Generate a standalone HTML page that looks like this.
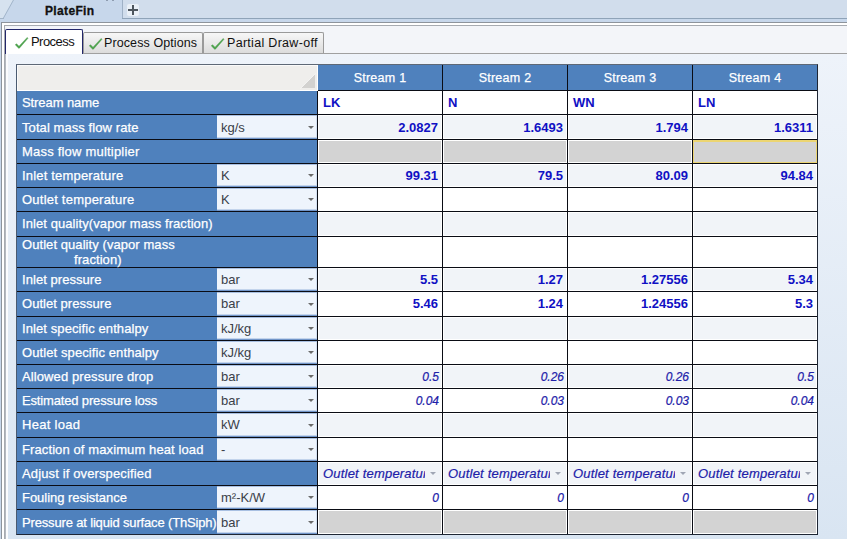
<!DOCTYPE html>
<html><head><meta charset="utf-8"><title>PlateFin</title>
<style>
*{margin:0;padding:0;box-sizing:border-box}
html,body{width:847px;height:539px;overflow:hidden}
body{position:relative;background:#c7d7eb;font-family:"Liberation Sans",sans-serif;font-size:13px;color:#000}
.a{position:absolute}
.t{position:absolute;white-space:nowrap;line-height:15px}
.lb{color:#fff;font-size:13px;-webkit-text-stroke:0.25px #fff}
.un{color:#3a4048;font-size:13px}
.vb{color:#1010c4;font-weight:bold;font-size:13px}
.vi{color:#2020a8;font-style:italic;font-size:12px;-webkit-text-stroke:0.2px #2020a8}
.arr{position:absolute;width:0;height:0;border-left:3px solid transparent;border-right:3px solid transparent;border-top:3px solid #6a6a6a}
.tab{position:absolute;border:1px solid #9a9a9a;border-bottom:none;border-radius:2px 2px 0 0;background:linear-gradient(#f7f7f7,#dcdcdc)}
.ub{position:absolute;left:217px;width:100px;background:#eef4fc;box-shadow:inset 0 1px 0 #a9c0e2,inset 0 -1px 0 #7195c9,inset 0 -2px 0 #c3d4ec,inset -1px 0 0 #d3e0f2}
</style></head><body>
<svg class="a" style="left:0;top:0" width="847" height="26">
<rect x="0" y="0" width="847" height="22" fill="#c7d7eb"/>
<polygon points="0,0 13,0 3,18 0,18" fill="#d6e2ef"/>
<rect x="122" y="0" width="725" height="18" fill="#d1ddec"/>
<line x1="13.5" y1="0" x2="3.5" y2="18" stroke="#a3b6cb" stroke-width="1"/>
<rect x="0" y="18" width="4" height="1" fill="#a3b5c9"/>
<rect x="122" y="0" width="1" height="19" fill="#9fb1c6"/>
<rect x="122" y="18" width="725" height="1" fill="#8fa3b8"/>
<rect x="1" y="22" width="846" height="1" fill="#8d949c"/>
<rect x="2" y="23" width="845" height="2" fill="#ffffff"/>
<rect x="4" y="25" width="843" height="1" fill="#a7abb1"/>
</svg>
<div class="a" style="left:1px;top:22px;width:1px;height:517px;background:#8d949c"></div>
<div class="a" style="left:2px;top:23px;width:2px;height:516px;background:#fff"></div>
<div class="a" style="left:4px;top:25px;width:1px;height:514px;background:#a7abb1"></div>
<div class="a" style="left:5px;top:26px;width:842px;height:27px;background:#f3f5f9"></div>
<div class="a" style="left:5px;top:53px;width:842px;height:1px;background:#a0a0a0"></div>
<div class="a" style="left:5px;top:54px;width:842px;height:485px;background:linear-gradient(#eef3fa,#d9e5f2)"></div>
<div class="a" style="left:5px;top:54px;width:1px;height:485px;background:#b4b9c0"></div>
<div class="a" style="left:6px;top:54px;width:2px;height:485px;background:#fbfcfe"></div>
<div class="t" style="left:45px;top:4px;font-weight:bold;font-size:12px;letter-spacing:0.35px;color:#111;-webkit-text-stroke:0.3px #111">PlateFin</div>
<div class="a" style="left:127px;top:4px;width:12px;height:12px;background:#eaf0f7;border-radius:2px"></div>
<div class="a" style="left:128px;top:9px;width:10px;height:2px;background:#4e565e"></div>
<div class="a" style="left:132px;top:5px;width:2px;height:10px;background:#4e565e"></div>
<div class="a" style="left:106px;top:0;width:2px;height:1px;background:#8e9cb0"></div>
<div class="a" style="left:112px;top:0;width:2px;height:1px;background:#8e9cb0"></div>

<div class="a" style="left:5px;top:29px;width:78px;height:25px;background:#fff;border:1px solid #23276a;border-bottom:none;border-radius:2px 2px 0 0"></div>
<svg class="a" style="left:14px;top:37px" width="15" height="13"><path d="M1.2,7.8 L2.6,6.8 L5,9.2 L13.2,0.4 L14,1.3 L5.4,11.2 L4.6,11.2 Z" fill="#4da64d" stroke="#3f8f3f" stroke-width="0.35"/></svg>
<div class="t" style="left:31px;top:34px;font-size:13px;letter-spacing:-0.55px;color:#111">Process</div>
<div class="tab" style="left:83px;top:32px;width:120px;height:21px"></div>
<svg class="a" style="left:88px;top:38px" width="15" height="13"><path d="M1.2,7.8 L2.6,6.8 L5,9.2 L13.2,0.4 L14,1.3 L5.4,11.2 L4.6,11.2 Z" fill="#4da64d" stroke="#3f8f3f" stroke-width="0.35"/></svg>
<div class="t" style="left:104px;top:36px;font-size:12.5px;letter-spacing:0.1px;color:#111">Process Options</div>
<div class="tab" style="left:203px;top:32px;width:121px;height:21px"></div>
<svg class="a" style="left:210px;top:38px" width="15" height="13"><path d="M1.2,7.8 L2.6,6.8 L5,9.2 L13.2,0.4 L14,1.3 L5.4,11.2 L4.6,11.2 Z" fill="#4da64d" stroke="#3f8f3f" stroke-width="0.35"/></svg>
<div class="t" style="left:227px;top:36px;font-size:12.5px;letter-spacing:0.3px;color:#111">Partial Draw-off</div>
<div class="a" style="left:16px;top:64px;width:802px;height:471px;border:1px solid #1e2634;border-left-color:#4a5a70;border-top-color:#5e6876;background:#0a0c14"></div>
<div class="a" style="left:17px;top:65px;width:301px;height:26px;background:#efeeec;border:1px solid #fff;border-left-color:#fafafa;border-top-color:#fafafa"></div>
<svg class="a" style="left:300px;top:73px" width="17" height="16"><polygon points="1,15 15,15 15,1" fill="#d3d2d0"/><line x1="0.5" y1="15.5" x2="15.5" y2="0.5" stroke="#fff" stroke-opacity="0.6" stroke-width="1"/></svg>
<div class="a" style="left:318px;top:65px;width:124px;height:25px;background:#4f81bd"></div>
<div class="t lb" style="left:318px;top:71px;width:124px;text-align:center;font-size:12.5px;letter-spacing:0.25px">Stream 1</div>
<div class="a" style="left:443px;top:65px;width:124px;height:25px;background:#4f81bd"></div>
<div class="t lb" style="left:443px;top:71px;width:124px;text-align:center;font-size:12.5px;letter-spacing:0.25px">Stream 2</div>
<div class="a" style="left:568px;top:65px;width:124px;height:25px;background:#4f81bd"></div>
<div class="t lb" style="left:568px;top:71px;width:124px;text-align:center;font-size:12.5px;letter-spacing:0.25px">Stream 3</div>
<div class="a" style="left:693px;top:65px;width:124px;height:25px;background:#4f81bd"></div>
<div class="t lb" style="left:693px;top:71px;width:124px;text-align:center;font-size:12.5px;letter-spacing:0.25px">Stream 4</div>
<div class="a" style="left:17px;top:91px;width:300px;height:23px;background:#4f81bd"></div>
<div class="t lb" style="left:22px;top:95px;letter-spacing:-0.08px">Stream name</div>
<div class="a" style="left:318px;top:91px;width:124px;height:23px;background:#ffffff;border:1px solid #fff"></div>
<div class="t vb" style="left:323px;top:95px">LK</div>
<div class="a" style="left:443px;top:91px;width:124px;height:23px;background:#ffffff;border:1px solid #fff"></div>
<div class="t vb" style="left:448px;top:95px">N</div>
<div class="a" style="left:568px;top:91px;width:124px;height:23px;background:#ffffff;border:1px solid #fff"></div>
<div class="t vb" style="left:573px;top:95px">WN</div>
<div class="a" style="left:693px;top:91px;width:124px;height:23px;background:#ffffff;border:1px solid #fff"></div>
<div class="t vb" style="left:698px;top:95px">LN</div>
<div class="a" style="left:17px;top:115px;width:300px;height:24px;background:#4f81bd"></div>
<div class="t lb" style="left:22px;top:120px;letter-spacing:0.079px">Total mass flow rate</div>
<div class="ub" style="top:115px;height:24px"></div>
<div class="t un" style="left:221px;top:120px">kg/s</div>
<div class="arr" style="left:308px;top:126px"></div>
<div class="a" style="left:318px;top:115px;width:124px;height:24px;background:#f1f4f8;border:1px solid #fff"></div>
<div class="t vb" style="left:318px;top:120px;width:120px;text-align:right">2.0827</div>
<div class="a" style="left:443px;top:115px;width:124px;height:24px;background:#f1f4f8;border:1px solid #fff"></div>
<div class="t vb" style="left:443px;top:120px;width:120px;text-align:right">1.6493</div>
<div class="a" style="left:568px;top:115px;width:124px;height:24px;background:#f1f4f8;border:1px solid #fff"></div>
<div class="t vb" style="left:568px;top:120px;width:120px;text-align:right">1.794</div>
<div class="a" style="left:693px;top:115px;width:124px;height:24px;background:#f1f4f8;border:1px solid #fff"></div>
<div class="t vb" style="left:693px;top:120px;width:120px;text-align:right">1.6311</div>
<div class="a" style="left:17px;top:140px;width:300px;height:23px;background:#4f81bd"></div>
<div class="t lb" style="left:22px;top:144px;letter-spacing:0.205px">Mass flow multiplier</div>
<div class="a" style="left:318px;top:140px;width:124px;height:23px;background:#d3d3d3;border:1px solid #fff"></div>
<div class="a" style="left:443px;top:140px;width:124px;height:23px;background:#d3d3d3;border:1px solid #fff"></div>
<div class="a" style="left:568px;top:140px;width:124px;height:23px;background:#d3d3d3;border:1px solid #fff"></div>
<div class="a" style="left:693px;top:140px;width:124px;height:23px;background:#d3d3d3;border:1px solid #ecd572;border-top-width:2px"></div>
<div class="a" style="left:17px;top:164px;width:300px;height:23px;background:#4f81bd"></div>
<div class="t lb" style="left:22px;top:168px;letter-spacing:0.181px">Inlet temperature</div>
<div class="ub" style="top:164px;height:23px"></div>
<div class="t un" style="left:221px;top:168px">K</div>
<div class="arr" style="left:308px;top:174px"></div>
<div class="a" style="left:318px;top:164px;width:124px;height:23px;background:#f1f4f8;border:1px solid #fff"></div>
<div class="t vb" style="left:318px;top:168px;width:120px;text-align:right">99.31</div>
<div class="a" style="left:443px;top:164px;width:124px;height:23px;background:#f1f4f8;border:1px solid #fff"></div>
<div class="t vb" style="left:443px;top:168px;width:120px;text-align:right">79.5</div>
<div class="a" style="left:568px;top:164px;width:124px;height:23px;background:#f1f4f8;border:1px solid #fff"></div>
<div class="t vb" style="left:568px;top:168px;width:120px;text-align:right">80.09</div>
<div class="a" style="left:693px;top:164px;width:124px;height:23px;background:#f1f4f8;border:1px solid #fff"></div>
<div class="t vb" style="left:693px;top:168px;width:120px;text-align:right">94.84</div>
<div class="a" style="left:17px;top:188px;width:300px;height:23px;background:#4f81bd"></div>
<div class="t lb" style="left:22px;top:192px;letter-spacing:0.224px">Outlet temperature</div>
<div class="ub" style="top:188px;height:23px"></div>
<div class="t un" style="left:221px;top:192px">K</div>
<div class="arr" style="left:308px;top:198px"></div>
<div class="a" style="left:318px;top:188px;width:124px;height:23px;background:#ffffff;border:1px solid #fff"></div>
<div class="a" style="left:443px;top:188px;width:124px;height:23px;background:#ffffff;border:1px solid #fff"></div>
<div class="a" style="left:568px;top:188px;width:124px;height:23px;background:#ffffff;border:1px solid #fff"></div>
<div class="a" style="left:693px;top:188px;width:124px;height:23px;background:#ffffff;border:1px solid #fff"></div>
<div class="a" style="left:17px;top:212px;width:300px;height:24px;background:#4f81bd"></div>
<div class="t lb" style="left:22px;top:216px;letter-spacing:0.082px">Inlet quality(vapor mass fraction)</div>
<div class="a" style="left:318px;top:212px;width:124px;height:24px;background:#f1f4f8;border:1px solid #fff"></div>
<div class="a" style="left:443px;top:212px;width:124px;height:24px;background:#f1f4f8;border:1px solid #fff"></div>
<div class="a" style="left:568px;top:212px;width:124px;height:24px;background:#f1f4f8;border:1px solid #fff"></div>
<div class="a" style="left:693px;top:212px;width:124px;height:24px;background:#f1f4f8;border:1px solid #fff"></div>
<div class="a" style="left:17px;top:237px;width:300px;height:30px;background:#4f81bd"></div>
<div class="t lb" style="left:22px;top:237px;letter-spacing:0.068px">Outlet quality (vapor mass</div>
<div class="t lb" style="left:74px;top:252px;letter-spacing:0.07px">fraction)</div>
<div class="a" style="left:318px;top:237px;width:124px;height:30px;background:#ffffff;border:1px solid #fff"></div>
<div class="a" style="left:443px;top:237px;width:124px;height:30px;background:#ffffff;border:1px solid #fff"></div>
<div class="a" style="left:568px;top:237px;width:124px;height:30px;background:#ffffff;border:1px solid #fff"></div>
<div class="a" style="left:693px;top:237px;width:124px;height:30px;background:#ffffff;border:1px solid #fff"></div>
<div class="a" style="left:17px;top:268px;width:300px;height:23px;background:#4f81bd"></div>
<div class="t lb" style="left:22px;top:272px;letter-spacing:0.054px">Inlet pressure</div>
<div class="ub" style="top:268px;height:23px"></div>
<div class="t un" style="left:221px;top:272px">bar</div>
<div class="arr" style="left:308px;top:278px"></div>
<div class="a" style="left:318px;top:268px;width:124px;height:23px;background:#f1f4f8;border:1px solid #fff"></div>
<div class="t vb" style="left:318px;top:272px;width:120px;text-align:right">5.5</div>
<div class="a" style="left:443px;top:268px;width:124px;height:23px;background:#f1f4f8;border:1px solid #fff"></div>
<div class="t vb" style="left:443px;top:272px;width:120px;text-align:right">1.27</div>
<div class="a" style="left:568px;top:268px;width:124px;height:23px;background:#f1f4f8;border:1px solid #fff"></div>
<div class="t vb" style="left:568px;top:272px;width:120px;text-align:right">1.27556</div>
<div class="a" style="left:693px;top:268px;width:124px;height:23px;background:#f1f4f8;border:1px solid #fff"></div>
<div class="t vb" style="left:693px;top:272px;width:120px;text-align:right">5.34</div>
<div class="a" style="left:17px;top:292px;width:300px;height:24px;background:#4f81bd"></div>
<div class="t lb" style="left:22px;top:296px;letter-spacing:0.043px">Outlet pressure</div>
<div class="ub" style="top:292px;height:24px"></div>
<div class="t un" style="left:221px;top:296px">bar</div>
<div class="arr" style="left:308px;top:303px"></div>
<div class="a" style="left:318px;top:292px;width:124px;height:24px;background:#ffffff;border:1px solid #fff"></div>
<div class="t vb" style="left:318px;top:296px;width:120px;text-align:right">5.46</div>
<div class="a" style="left:443px;top:292px;width:124px;height:24px;background:#ffffff;border:1px solid #fff"></div>
<div class="t vb" style="left:443px;top:296px;width:120px;text-align:right">1.24</div>
<div class="a" style="left:568px;top:292px;width:124px;height:24px;background:#ffffff;border:1px solid #fff"></div>
<div class="t vb" style="left:568px;top:296px;width:120px;text-align:right">1.24556</div>
<div class="a" style="left:693px;top:292px;width:124px;height:24px;background:#ffffff;border:1px solid #fff"></div>
<div class="t vb" style="left:693px;top:296px;width:120px;text-align:right">5.3</div>
<div class="a" style="left:17px;top:317px;width:300px;height:23px;background:#4f81bd"></div>
<div class="t lb" style="left:22px;top:321px;letter-spacing:0.091px">Inlet specific enthalpy</div>
<div class="ub" style="top:317px;height:23px"></div>
<div class="t un" style="left:221px;top:321px">kJ/kg</div>
<div class="arr" style="left:308px;top:327px"></div>
<div class="a" style="left:318px;top:317px;width:124px;height:23px;background:#f1f4f8;border:1px solid #fff"></div>
<div class="a" style="left:443px;top:317px;width:124px;height:23px;background:#f1f4f8;border:1px solid #fff"></div>
<div class="a" style="left:568px;top:317px;width:124px;height:23px;background:#f1f4f8;border:1px solid #fff"></div>
<div class="a" style="left:693px;top:317px;width:124px;height:23px;background:#f1f4f8;border:1px solid #fff"></div>
<div class="a" style="left:17px;top:341px;width:300px;height:23px;background:#4f81bd"></div>
<div class="t lb" style="left:22px;top:345px;letter-spacing:0.096px">Outlet specific enthalpy</div>
<div class="ub" style="top:341px;height:23px"></div>
<div class="t un" style="left:221px;top:345px">kJ/kg</div>
<div class="arr" style="left:308px;top:351px"></div>
<div class="a" style="left:318px;top:341px;width:124px;height:23px;background:#ffffff;border:1px solid #fff"></div>
<div class="a" style="left:443px;top:341px;width:124px;height:23px;background:#ffffff;border:1px solid #fff"></div>
<div class="a" style="left:568px;top:341px;width:124px;height:23px;background:#ffffff;border:1px solid #fff"></div>
<div class="a" style="left:693px;top:341px;width:124px;height:23px;background:#ffffff;border:1px solid #fff"></div>
<div class="a" style="left:17px;top:365px;width:300px;height:23px;background:#4f81bd"></div>
<div class="t lb" style="left:22px;top:369px;letter-spacing:0.1px">Allowed pressure drop</div>
<div class="ub" style="top:365px;height:23px"></div>
<div class="t un" style="left:221px;top:369px">bar</div>
<div class="arr" style="left:308px;top:375px"></div>
<div class="a" style="left:318px;top:365px;width:124px;height:23px;background:#f1f4f8;border:1px solid #fff"></div>
<div class="t vi" style="left:318px;top:370px;width:121px;text-align:right">0.5</div>
<div class="a" style="left:443px;top:365px;width:124px;height:23px;background:#f1f4f8;border:1px solid #fff"></div>
<div class="t vi" style="left:443px;top:370px;width:121px;text-align:right">0.26</div>
<div class="a" style="left:568px;top:365px;width:124px;height:23px;background:#f1f4f8;border:1px solid #fff"></div>
<div class="t vi" style="left:568px;top:370px;width:121px;text-align:right">0.26</div>
<div class="a" style="left:693px;top:365px;width:124px;height:23px;background:#f1f4f8;border:1px solid #fff"></div>
<div class="t vi" style="left:693px;top:370px;width:121px;text-align:right">0.5</div>
<div class="a" style="left:17px;top:389px;width:300px;height:23px;background:#4f81bd"></div>
<div class="t lb" style="left:22px;top:393px;letter-spacing:-0.155px">Estimated pressure loss</div>
<div class="ub" style="top:389px;height:23px"></div>
<div class="t un" style="left:221px;top:393px">bar</div>
<div class="arr" style="left:308px;top:399px"></div>
<div class="a" style="left:318px;top:389px;width:124px;height:23px;background:#ffffff;border:1px solid #fff"></div>
<div class="t vi" style="left:318px;top:394px;width:121px;text-align:right">0.04</div>
<div class="a" style="left:443px;top:389px;width:124px;height:23px;background:#ffffff;border:1px solid #fff"></div>
<div class="t vi" style="left:443px;top:394px;width:121px;text-align:right">0.03</div>
<div class="a" style="left:568px;top:389px;width:124px;height:23px;background:#ffffff;border:1px solid #fff"></div>
<div class="t vi" style="left:568px;top:394px;width:121px;text-align:right">0.03</div>
<div class="a" style="left:693px;top:389px;width:124px;height:23px;background:#ffffff;border:1px solid #fff"></div>
<div class="t vi" style="left:693px;top:394px;width:121px;text-align:right">0.04</div>
<div class="a" style="left:17px;top:413px;width:300px;height:24px;background:#4f81bd"></div>
<div class="t lb" style="left:22px;top:417px;letter-spacing:0.3px">Heat load</div>
<div class="ub" style="top:413px;height:24px"></div>
<div class="t un" style="left:221px;top:417px">kW</div>
<div class="arr" style="left:308px;top:424px"></div>
<div class="a" style="left:318px;top:413px;width:124px;height:24px;background:#f1f4f8;border:1px solid #fff"></div>
<div class="a" style="left:443px;top:413px;width:124px;height:24px;background:#f1f4f8;border:1px solid #fff"></div>
<div class="a" style="left:568px;top:413px;width:124px;height:24px;background:#f1f4f8;border:1px solid #fff"></div>
<div class="a" style="left:693px;top:413px;width:124px;height:24px;background:#f1f4f8;border:1px solid #fff"></div>
<div class="a" style="left:17px;top:438px;width:300px;height:23px;background:#4f81bd"></div>
<div class="t lb" style="left:22px;top:442px;letter-spacing:0.104px">Fraction of maximum heat load</div>
<div class="ub" style="top:438px;height:23px"></div>
<div class="t un" style="left:221px;top:442px">-</div>
<div class="arr" style="left:308px;top:448px"></div>
<div class="a" style="left:318px;top:438px;width:124px;height:23px;background:#ffffff;border:1px solid #fff"></div>
<div class="a" style="left:443px;top:438px;width:124px;height:23px;background:#ffffff;border:1px solid #fff"></div>
<div class="a" style="left:568px;top:438px;width:124px;height:23px;background:#ffffff;border:1px solid #fff"></div>
<div class="a" style="left:693px;top:438px;width:124px;height:23px;background:#ffffff;border:1px solid #fff"></div>
<div class="a" style="left:17px;top:462px;width:300px;height:23px;background:#4f81bd"></div>
<div class="t lb" style="left:22px;top:466px;letter-spacing:0.132px">Adjust if overspecified</div>
<div class="a" style="left:318px;top:462px;width:124px;height:23px;background:#f1f4f8;border:1px solid #fff"></div>
<div class="t vi" style="left:323px;top:466px;width:102px;overflow:hidden;font-size:13px;letter-spacing:0.2px">Outlet temperature</div>
<div class="arr" style="left:430px;top:472px;border-top-color:#a0a6b4"></div>
<div class="a" style="left:443px;top:462px;width:124px;height:23px;background:#f1f4f8;border:1px solid #fff"></div>
<div class="t vi" style="left:448px;top:466px;width:102px;overflow:hidden;font-size:13px;letter-spacing:0.2px">Outlet temperature</div>
<div class="arr" style="left:555px;top:472px;border-top-color:#a0a6b4"></div>
<div class="a" style="left:568px;top:462px;width:124px;height:23px;background:#f1f4f8;border:1px solid #fff"></div>
<div class="t vi" style="left:573px;top:466px;width:102px;overflow:hidden;font-size:13px;letter-spacing:0.2px">Outlet temperature</div>
<div class="arr" style="left:680px;top:472px;border-top-color:#a0a6b4"></div>
<div class="a" style="left:693px;top:462px;width:124px;height:23px;background:#f1f4f8;border:1px solid #fff"></div>
<div class="t vi" style="left:698px;top:466px;width:102px;overflow:hidden;font-size:13px;letter-spacing:0.2px">Outlet temperature</div>
<div class="arr" style="left:805px;top:472px;border-top-color:#a0a6b4"></div>
<div class="a" style="left:17px;top:486px;width:300px;height:23px;background:#4f81bd"></div>
<div class="t lb" style="left:22px;top:490px;letter-spacing:-0.035px">Fouling resistance</div>
<div class="ub" style="top:486px;height:23px"></div>
<div class="t un" style="left:221px;top:490px">m²-K/W</div>
<div class="arr" style="left:308px;top:496px"></div>
<div class="a" style="left:318px;top:486px;width:124px;height:23px;background:#ffffff;border:1px solid #fff"></div>
<div class="t vi" style="left:318px;top:491px;width:121px;text-align:right">0</div>
<div class="a" style="left:443px;top:486px;width:124px;height:23px;background:#ffffff;border:1px solid #fff"></div>
<div class="t vi" style="left:443px;top:491px;width:121px;text-align:right">0</div>
<div class="a" style="left:568px;top:486px;width:124px;height:23px;background:#ffffff;border:1px solid #fff"></div>
<div class="t vi" style="left:568px;top:491px;width:121px;text-align:right">0</div>
<div class="a" style="left:693px;top:486px;width:124px;height:23px;background:#ffffff;border:1px solid #fff"></div>
<div class="t vi" style="left:693px;top:491px;width:121px;text-align:right">0</div>
<div class="a" style="left:17px;top:510px;width:300px;height:24px;background:#4f81bd"></div>
<div class="t lb" style="left:22px;top:515px;letter-spacing:-0.16px">Pressure at liquid surface (ThSiph)</div>
<div class="ub" style="top:510px;height:24px"></div>
<div class="t un" style="left:221px;top:515px">bar</div>
<div class="arr" style="left:308px;top:521px"></div>
<div class="a" style="left:318px;top:510px;width:124px;height:24px;background:#d3d3d3;border:1px solid #fff"></div>
<div class="a" style="left:443px;top:510px;width:124px;height:24px;background:#d3d3d3;border:1px solid #fff"></div>
<div class="a" style="left:568px;top:510px;width:124px;height:24px;background:#d3d3d3;border:1px solid #fff"></div>
<div class="a" style="left:693px;top:510px;width:124px;height:24px;background:#d3d3d3;border:1px solid #fff"></div>
</body></html>
